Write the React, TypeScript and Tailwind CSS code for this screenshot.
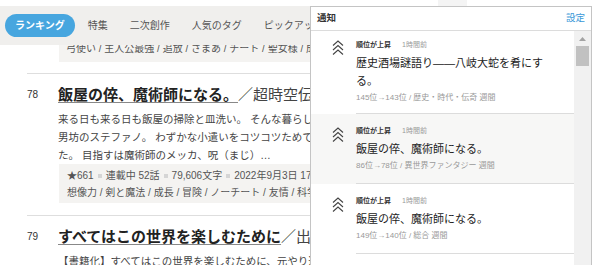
import * as React from 'react'

const FONT = 'font-["Liberation_Sans","Noto_Sans_CJK_JP",sans-serif]'

function RiseIcon(): React.ReactElement {
  return (
    <svg width="12" height="16" viewBox="0 0 12 16" fill="none" stroke="#444" strokeWidth="1.1">
      <polyline points="1,5.5 6,1 11,5.5" />
      <polyline points="1,10 6,5.5 11,10" />
      <polyline points="1,14.5 6,10 11,14.5" />
    </svg>
  )
}

interface Notice {
  title: string
  meta: string
  shaded?: boolean
}

const notices: Notice[] = [
  { title: '歴史酒場謎語り――八岐大蛇を肴にする。', meta: '145位→143位 / 歴史・時代・伝奇 週間' },
  { title: '飯屋の倅、魔術師になる。', meta: '86位→78位 / 異世界ファンタジー 週間', shaded: true },
  { title: '飯屋の倅、魔術師になる。', meta: '149位→140位 / 総合 週間' },
  { title: '飯屋の倅、魔術師になる。', meta: '120位→98位 / 総合 日間' },
]

function NoticeRow({ notice, first }: { notice: Notice; first: boolean }): React.ReactElement {
  return (
    <div className={`flex ${notice.shaded ? 'bg-[#f7f7f6]' : 'bg-white'}`}>
      <div className={`pl-[21px] pr-[12px] ${first ? 'pt-[9px]' : 'pt-[13px]'}`}>
        <RiseIcon />
      </div>
      <div
        className={`flex-1 border-b border-[#dcdcdc] pr-[14px] ${first ? 'pt-[9px] pb-[9px]' : 'pt-[12px] pb-[11px]'}`}
      >
        <div className="flex items-center gap-[11px] h-[10px] text-[7px] leading-[10px]">
          <span className="font-bold text-[#333]">順位が上昇</span>
          <span className="text-[#999]">1時間前</span>
        </div>
        <div className="mt-[4px] text-[11px] leading-[18px] text-[#222]">{notice.title}</div>
        <div className="mt-[2px] text-[8px] leading-[12px] text-[#999]">{notice.meta}</div>
      </div>
    </div>
  )
}

function NoticePanel(): React.ReactElement {
  return (
    <div className="absolute left-[310px] top-[6px] w-[282px] h-[300px] border border-[#c4c4c4] bg-white flex flex-col">
      <div className="h-[24px] shrink-0 border-b border-[#dcdcdc] flex items-center justify-between px-[6px] text-[9.5px]">
        <span className="font-bold text-[#333]">通知</span>
        <span className="text-[#3a98d8]">設定</span>
      </div>
      <div className="flex flex-1 min-h-0">
        <div className="flex-1 min-w-0 overflow-hidden">
          {notices.map((n, i) => (
            <NoticeRow key={i} notice={n} first={i === 0} />
          ))}
        </div>
        <div className="w-[17px] shrink-0 bg-[#f1f1f1] flex flex-col items-center">
          <div className="h-[15px] flex items-center justify-center">
            <svg width="7" height="4" viewBox="0 0 7 4">
              <polygon points="0,4 3.5,0 7,4" fill="#a3a3a3" />
            </svg>
          </div>
          <div className="w-[13px] h-[20px] bg-[#c1c1c1]" />
        </div>
      </div>
    </div>
  )
}

function Sep(): React.ReactElement {
  return <span className="inline-block w-[4px] h-[4px] bg-[#d5d5d5] mx-[4px] align-middle" />
}

interface WorkProps {
  rank: string
  title: string
  author: string
  lines: string[]
  stats?: React.ReactNode
  tags?: string
}

function Work({ rank, title, author, lines, stats, tags }: WorkProps): React.ReactElement {
  return (
    <div className="flex border-t border-[#dedede] pt-[9px]">
      <div className="w-[31px] shrink-0 text-[10px] leading-[24px] text-[#333]">{rank}</div>
      <div className="flex-1 min-w-0">
        <div className="whitespace-nowrap text-[15px] leading-[24px]">
          <span className="font-bold text-[#222] underline decoration-[#888] underline-offset-[2px]">{title}</span>
          <span className="text-[#444]">{author}</span>
        </div>
        <div className="mt-[3px] text-[10.5px] leading-[18px] text-[#444]">
          {lines.map((l, i) => (
            <div key={i} className="whitespace-nowrap">{l}</div>
          ))}
        </div>
        {stats && (
          <div className="ml-[1px] bg-[#f4f3f1] pl-[8px] pt-[3px] pb-[2px] text-[10px] leading-[17px] text-[#555] whitespace-nowrap">
            <div>{stats}</div>
            <div>{tags}</div>
          </div>
        )}
      </div>
    </div>
  )
}

export default function App(): React.ReactElement {
  return (
    <div className={`relative w-[592px] h-[265px] overflow-hidden bg-white ${FONT}`}>
      <div className="h-[6px] flex">
        <div className="ml-[438px] w-[29px] h-full bg-[#f4f4f4]" />
      </div>
      <div className="h-[39px] bg-[#f0efed] flex items-center pl-[5px] whitespace-nowrap text-[10px] text-[#555]">
        <div className="h-[23px] rounded-full bg-[#47a6df] px-[10px] flex items-center font-bold text-white">
          ランキング
        </div>
        <div className="ml-[13px] flex gap-[22px]">
          <span>特集</span>
          <span>二次創作</span>
          <span>人気のタグ</span>
          <span>ピックアップ</span>
        </div>
      </div>
      <div className="pl-[27px]">
        <div className="ml-[32px] h-[17px] overflow-hidden bg-[#f4f3f1] pl-[7px] whitespace-nowrap text-[10px] leading-[16px] text-[#555]">
          <div className="-mt-[4px]">弓使い / 主人公最強 / 追放 / さまあ / チート / 聖女様 / 成り上がり</div>
        </div>
        <div className="mt-[11px]">
          <Work
            rank="78"
            title="飯屋の倅、魔術師になる。"
            author="／超時空伝説研究所"
            lines={[
              '来る日も来る日も飯屋の掃除と皿洗い。 そんな暮らしに嫌気がさしていた',
              '男坊のステファノ。 わずかな小遣いをコツコツためていた',
              'た。 目指すは魔術師のメッカ、呪（まじ）…',
            ]}
            stats={
              <>
                ★661<Sep />連載中 52話<Sep />79,606文字<Sep />2022年9月3日 17:00 更新
              </>
            }
            tags="想像力 / 剣と魔法 / 成長 / 冒険 / ノーチート / 友情 / 科学 / 魔法学園"
          />
          <div className="mt-[12px]">
            <Work
              rank="79"
              title="すべてはこの世界を楽しむために"
              author="／出井愛"
              lines={['【書籍化】すべてはこの世界を楽しむために、元やり込みゲーマーは']}
            />
          </div>
        </div>
      </div>
      <NoticePanel />
    </div>
  )
}
